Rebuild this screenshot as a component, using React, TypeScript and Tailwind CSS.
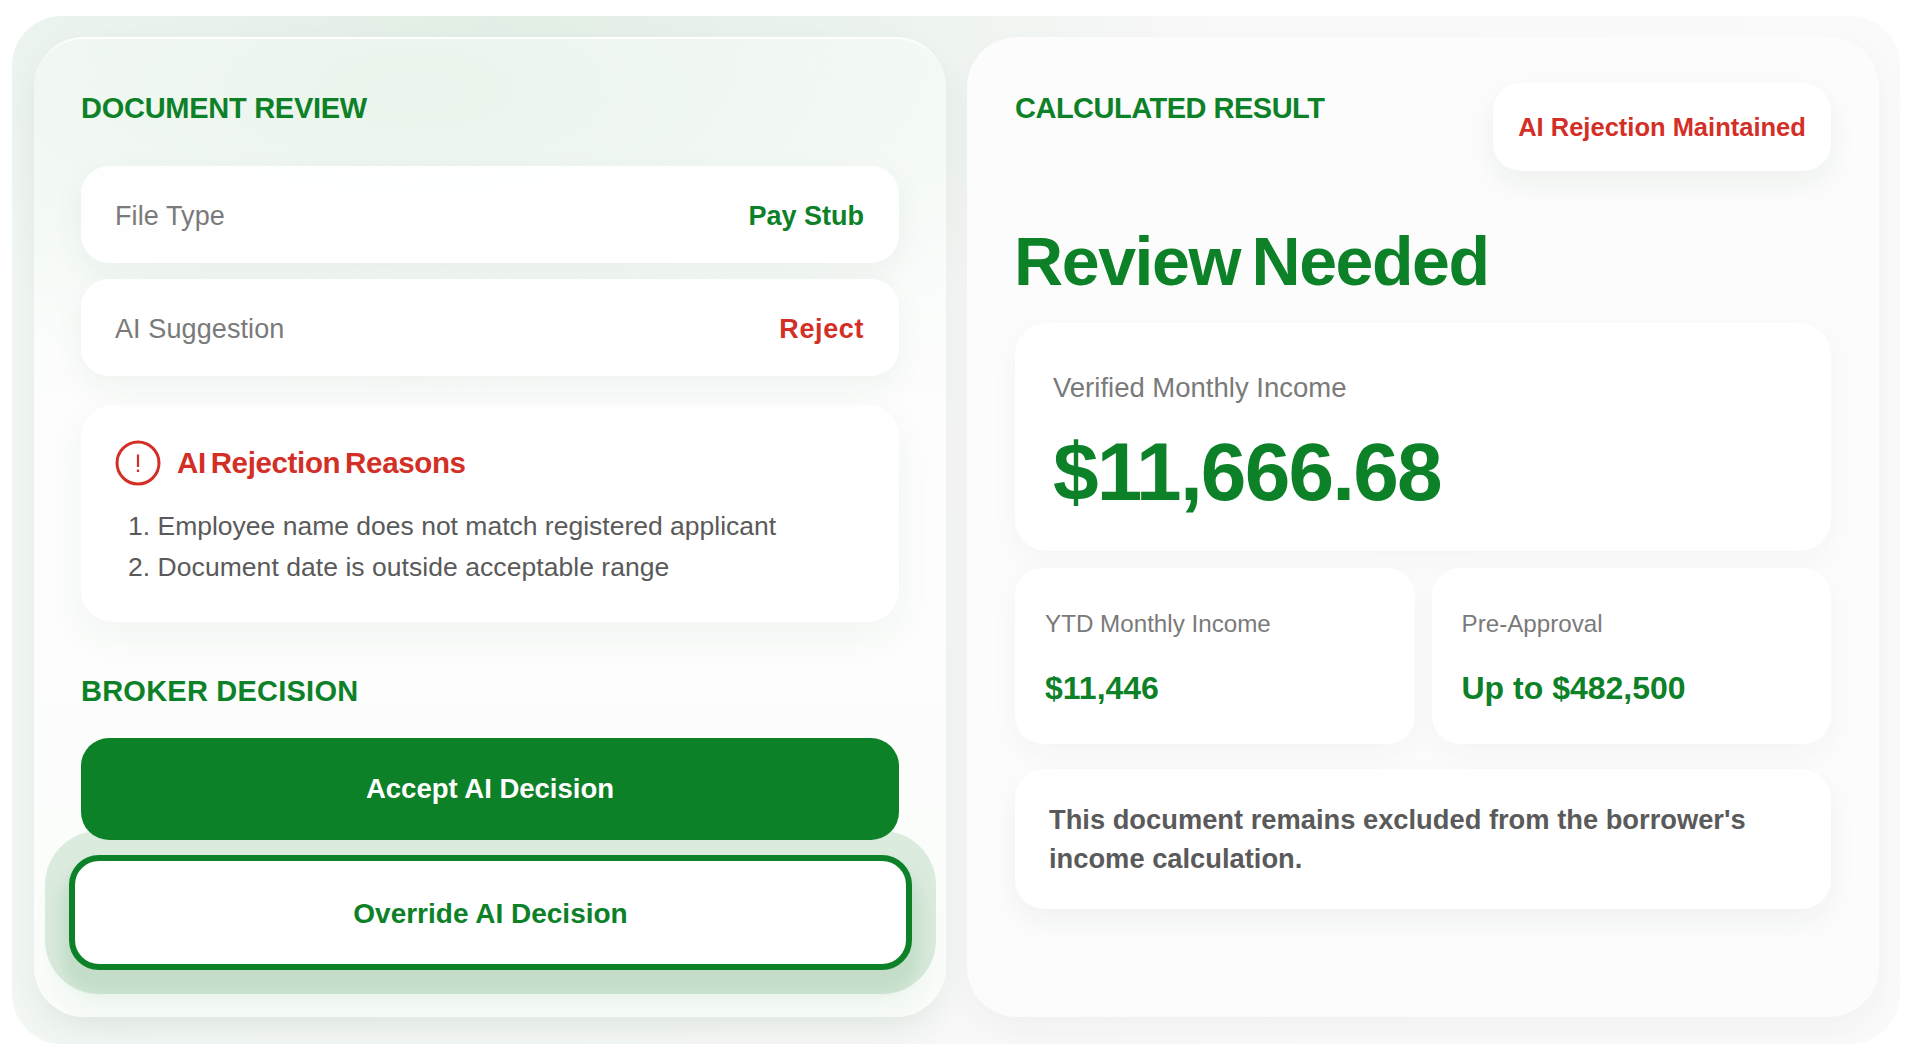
import React from "react";

const GREEN = "text-[#0d8128]";
const RED = "text-[#d32f27]";

const Heading = ({ children, className }: { children: React.ReactNode; className: string }) => (
    <h2 className={`text-[29px] leading-[34px] font-bold ${GREEN} ${className}`}>{children}</h2>
);

const Row = ({ label, value, color, valueClass }: { label: string; value: string; color: string; valueClass?: string }) => (
    <div className="h-[97px] rounded-[28px] bg-white/90 pl-[34px] pr-[35px] pt-[4px] flex items-center justify-between shadow-[0_10px_30px_rgba(40,90,50,0.06)]">
        <span className="text-[27px] tracking-[0.1px] text-[#7a7a7a]">{label}</span>
        <span className={`text-[27px] font-bold ${color} ${valueClass ?? ""}`}>{value}</span>
    </div>
);

const SmallCard = ({ label, value }: { label: string; value: string }) => (
    <div className="flex-1 h-[176px] rounded-[28px] bg-white/90 pl-[30px] pt-[41px] shadow-[0_10px_30px_rgba(40,60,50,0.04)]">
        <p className="text-[24.2px] leading-[30px] text-[#7a7a7a]">{label}</p>
        <p className={`mt-[30px] text-[32px] leading-[38px] font-bold ${GREEN}`}>{value}</p>
    </div>
);

export default function App() {
    return (
        <div className="w-[1920px] h-[1044px] overflow-hidden bg-white font-['Liberation_Sans',Arial,sans-serif]">
            <div className="ml-[12px] mt-[16px] w-[1888px] h-[1028px] rounded-[50px] bg-[radial-gradient(ellipse_760px_360px_at_480px_0px,#e2eee5,transparent),linear-gradient(to_right,#f2f7f3_0%,#f6f8f6_45%,#f9f9f9_60%,#fafafa_100%)] pl-[22px] pt-[21px] flex gap-[21px] items-start">
                {/* left panel */}
                <section className="w-[912px] h-[980px] rounded-[50px] border-t-2 border-white/80 bg-[radial-gradient(ellipse_720px_300px_at_380px_50px,#eaf4ec,transparent),linear-gradient(to_bottom,#f7fbf8,#fcfdfc_40%,#fbfdfb)] px-[47px] pt-[52px] shadow-[0_14px_30px_rgba(40,70,50,0.07)]">
                    <Heading className="tracking-[-0.27px]">DOCUMENT REVIEW</Heading>
                    <div className="mt-[41px] flex flex-col gap-[16px]">
                        <Row label="File Type" value="Pay Stub" color={GREEN} />
                        <Row label="AI Suggestion" value="Reject" color={RED} valueClass="tracking-[0.6px]" />
                    </div>
                    <div className="mt-[29px] h-[217px] rounded-[32px] bg-white/95 pl-[34px] pt-[35px] shadow-[0_12px_36px_rgba(40,90,50,0.05)]">
                        <div className="flex items-center gap-[16px]">
                            <svg width="46" height="46" viewBox="0 0 46 46" fill="none" className="text-[#d32f27]">
                                <circle cx="23" cy="23" r="21" stroke="currentColor" strokeWidth="3" />
                                <path d="M23 14.5v12.5M23 29.5v2.5" stroke="currentColor" strokeWidth="2.2" />
                            </svg>
                            <span className={`text-[29.5px] font-bold tracking-[-0.35px] [word-spacing:-3px] ${RED}`}>AI Rejection Reasons</span>
                        </div>
                        <ol className="mt-[20px] pl-[13px] text-[26.5px] leading-[41px] text-[#5a5a5a]">
                            <li>1. Employee name does not match registered applicant</li>
                            <li className="tracking-[0.05px]">2. Document date is outside acceptable range</li>
                        </ol>
                    </div>
                    <div className="mt-[52px]">
                        <Heading className="tracking-[0.23px]">BROKER DECISION</Heading>
                    </div>
                    <button className="relative z-10 mt-[30px] w-full h-[102px] rounded-[28px] bg-[#0d8128] text-white text-[27.5px] font-bold">
                        Accept AI Decision
                    </button>
                    <button className="-mx-[12px] mt-[15px] w-[843px] h-[115px] rounded-[30px] border-[6px] border-[#0d8128] bg-white pt-[3px] text-[28px] font-bold text-[#0d8128] shadow-[0_0_0_24px_rgba(30,130,50,0.14),0_16px_12px_6px_rgba(30,130,50,0.08),0_30px_24px_16px_rgba(30,130,50,0.05)]">
                        Override AI Decision
                    </button>
                </section>

                {/* right panel */}
                <section className="w-[912px] h-[980px] rounded-[50px] bg-[#fbfcfb] px-[48px] pt-[46px] shadow-[0_14px_30px_rgba(40,60,50,0.04)]">
                    <div className="flex items-start justify-between">
                        <Heading className="mt-[8px] tracking-[-0.5px]">CALCULATED RESULT</Heading>
                        <div className="h-[88px] w-[338px] rounded-[28px] bg-white flex items-center justify-center shadow-[0_12px_30px_rgba(40,60,50,0.06)]">
                            <span className={`text-[25.5px] font-bold ${RED}`}>AI Rejection Maintained</span>
                        </div>
                    </div>
                    <h1 className={`-ml-[1px] mt-[52px] text-[68px] leading-[76px] font-bold tracking-[-1.4px] [word-spacing:-6px] ${GREEN}`}>Review Needed</h1>
                    <div className="mt-[24px] h-[228px] rounded-[32px] bg-white/95 pl-[38px] pt-[49px] shadow-[0_10px_30px_rgba(40,60,50,0.04)]">
                        <p className="text-[27.5px] leading-[32px] text-[#7a7a7a]">Verified Monthly Income</p>
                        <p className={`mt-[22px] text-[82px] leading-[92px] font-bold tracking-[-1.8px] ${GREEN}`}>$11,666.68</p>
                    </div>
                    <div className="mt-[17px] flex gap-[17px]">
                        <SmallCard label="YTD Monthly Income" value="$11,446" />
                        <SmallCard label="Pre-Approval" value="Up to $482,500" />
                    </div>
                    <div className="mt-[25px] h-[140px] rounded-[30px] bg-white/95 pl-[34px] pt-[31px] shadow-[0_12px_30px_rgba(40,60,50,0.05)]">
                        <p className="text-[27.3px] leading-[39px] font-bold text-[#5a5a5a] w-[720px]">
                            This document remains excluded from the borrower's income calculation.
                        </p>
                    </div>
                </section>
            </div>
        </div>
    );
}
